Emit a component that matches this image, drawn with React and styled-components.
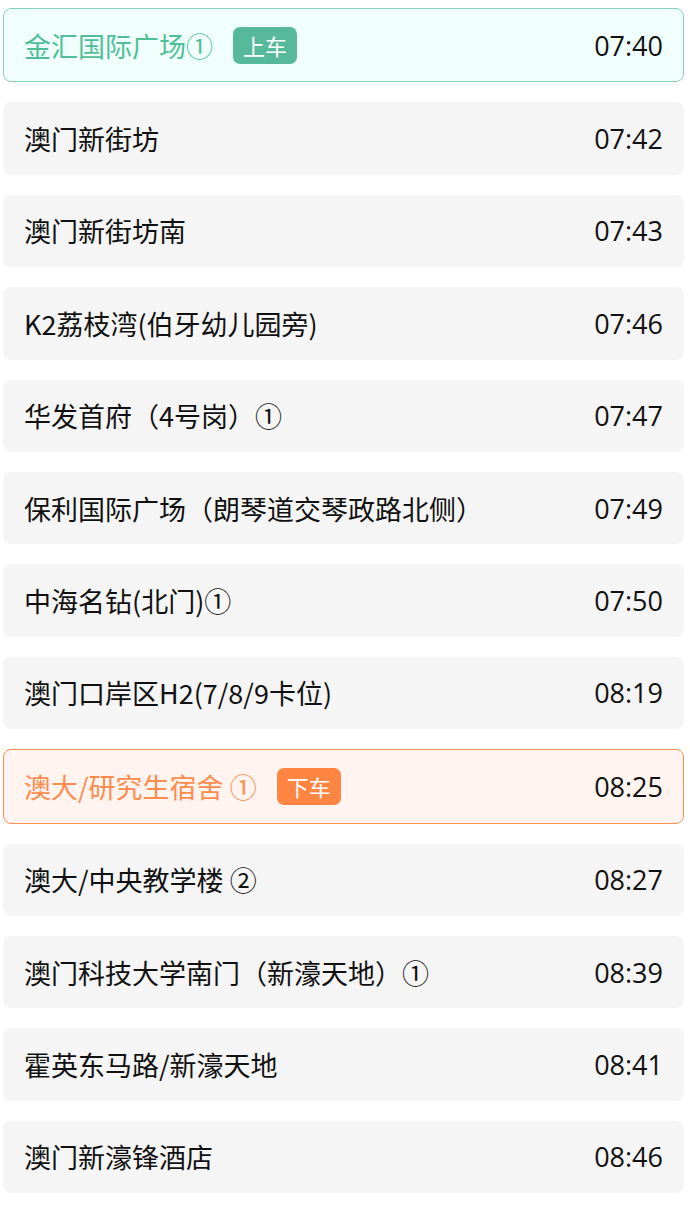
import React from "react";
import styled, { createGlobalStyle, css } from "styled-components";

const GlobalStyle = createGlobalStyle`
  body {
    margin: 0;
    background: #ffffff;
    font-family: "Noto Sans CJK SC", "Noto Sans", sans-serif;
  }
`;

const stops = [
  { name: "金汇国际广场①", time: "07:40", tag: "on" },
  { name: "澳门新街坊", time: "07:42" },
  { name: "澳门新街坊南", time: "07:43" },
  { name: "K2荔枝湾(伯牙幼儿园旁)", time: "07:46" },
  { name: "华发首府（4号岗）①", time: "07:47" },
  { name: "保利国际广场（朗琴道交琴政路北侧）", time: "07:49" },
  { name: "中海名钻(北门)①", time: "07:50" },
  { name: "澳门口岸区H2(7/8/9卡位)", time: "08:19" },
  { name: "澳大/研究生宿舍 ①", time: "08:25", tag: "off" },
  { name: "澳大/中央教学楼 ②", time: "08:27" },
  { name: "澳门科技大学南门（新濠天地）①", time: "08:39" },
  { name: "霍英东马路/新濠天地", time: "08:41" },
  { name: "澳门新濠锋酒店", time: "08:46" },
];

const tones = {
  on: { text: "#4fbf98", border: "#86d3bd", bg: "#f1fffc", badge: "#56b99a" },
  off: { text: "#ff8b4c", border: "#ff8f55", bg: "#fff4f0", badge: "#ff8642" },
};

export default function App() {
  return (
    <>
      <GlobalStyle />
      <List>
        {stops.map((s) => (
          <Row key={s.name + s.time} $tag={s.tag}>
            <Name $tag={s.tag}>
              {s.name}
              {s.tag && <Badge $tag={s.tag}>{s.tag === "on" ? "上车" : "下车"}</Badge>}
            </Name>
            <Time>{s.time}</Time>
          </Row>
        ))}
      </List>
    </>
  );
}

const List = styled.div`
  display: flex;
  flex-direction: column;
  gap: 20px;
  padding: 8px 6px 12px 3px;
`;

const Row = styled.div`
  display: flex;
  align-items: center;
  justify-content: space-between;
  height: 72.4px;
  padding: 0 21px;
  border-radius: 8px;
  background: #f5f5f5;
  box-sizing: content-box;
  ${(p) =>
    p.$tag &&
    css`
      background: ${tones[p.$tag].bg};
      border: 1px solid ${tones[p.$tag].border};
      padding: 0 20px;
    `}
`;

const Name = styled.div`
  display: flex;
  align-items: center;
  font-size: 27px;
  line-height: 1;
  color: ${(p) => (p.$tag ? tones[p.$tag].text : "#111111")};
  white-space: pre;
`;

const Badge = styled.span`
  margin-left: 20px;
  height: 37px;
  padding: 0 10px;
  display: inline-flex;
  align-items: center;
  border-radius: 7px;
  font-size: 22px;
  color: #ffffff;
  background: ${(p) => tones[p.$tag].badge};
`;

const Time = styled.div`
  font-family: "Open Sans", "Noto Sans", sans-serif;
  font-size: 27px;
  color: #111111;
`;
